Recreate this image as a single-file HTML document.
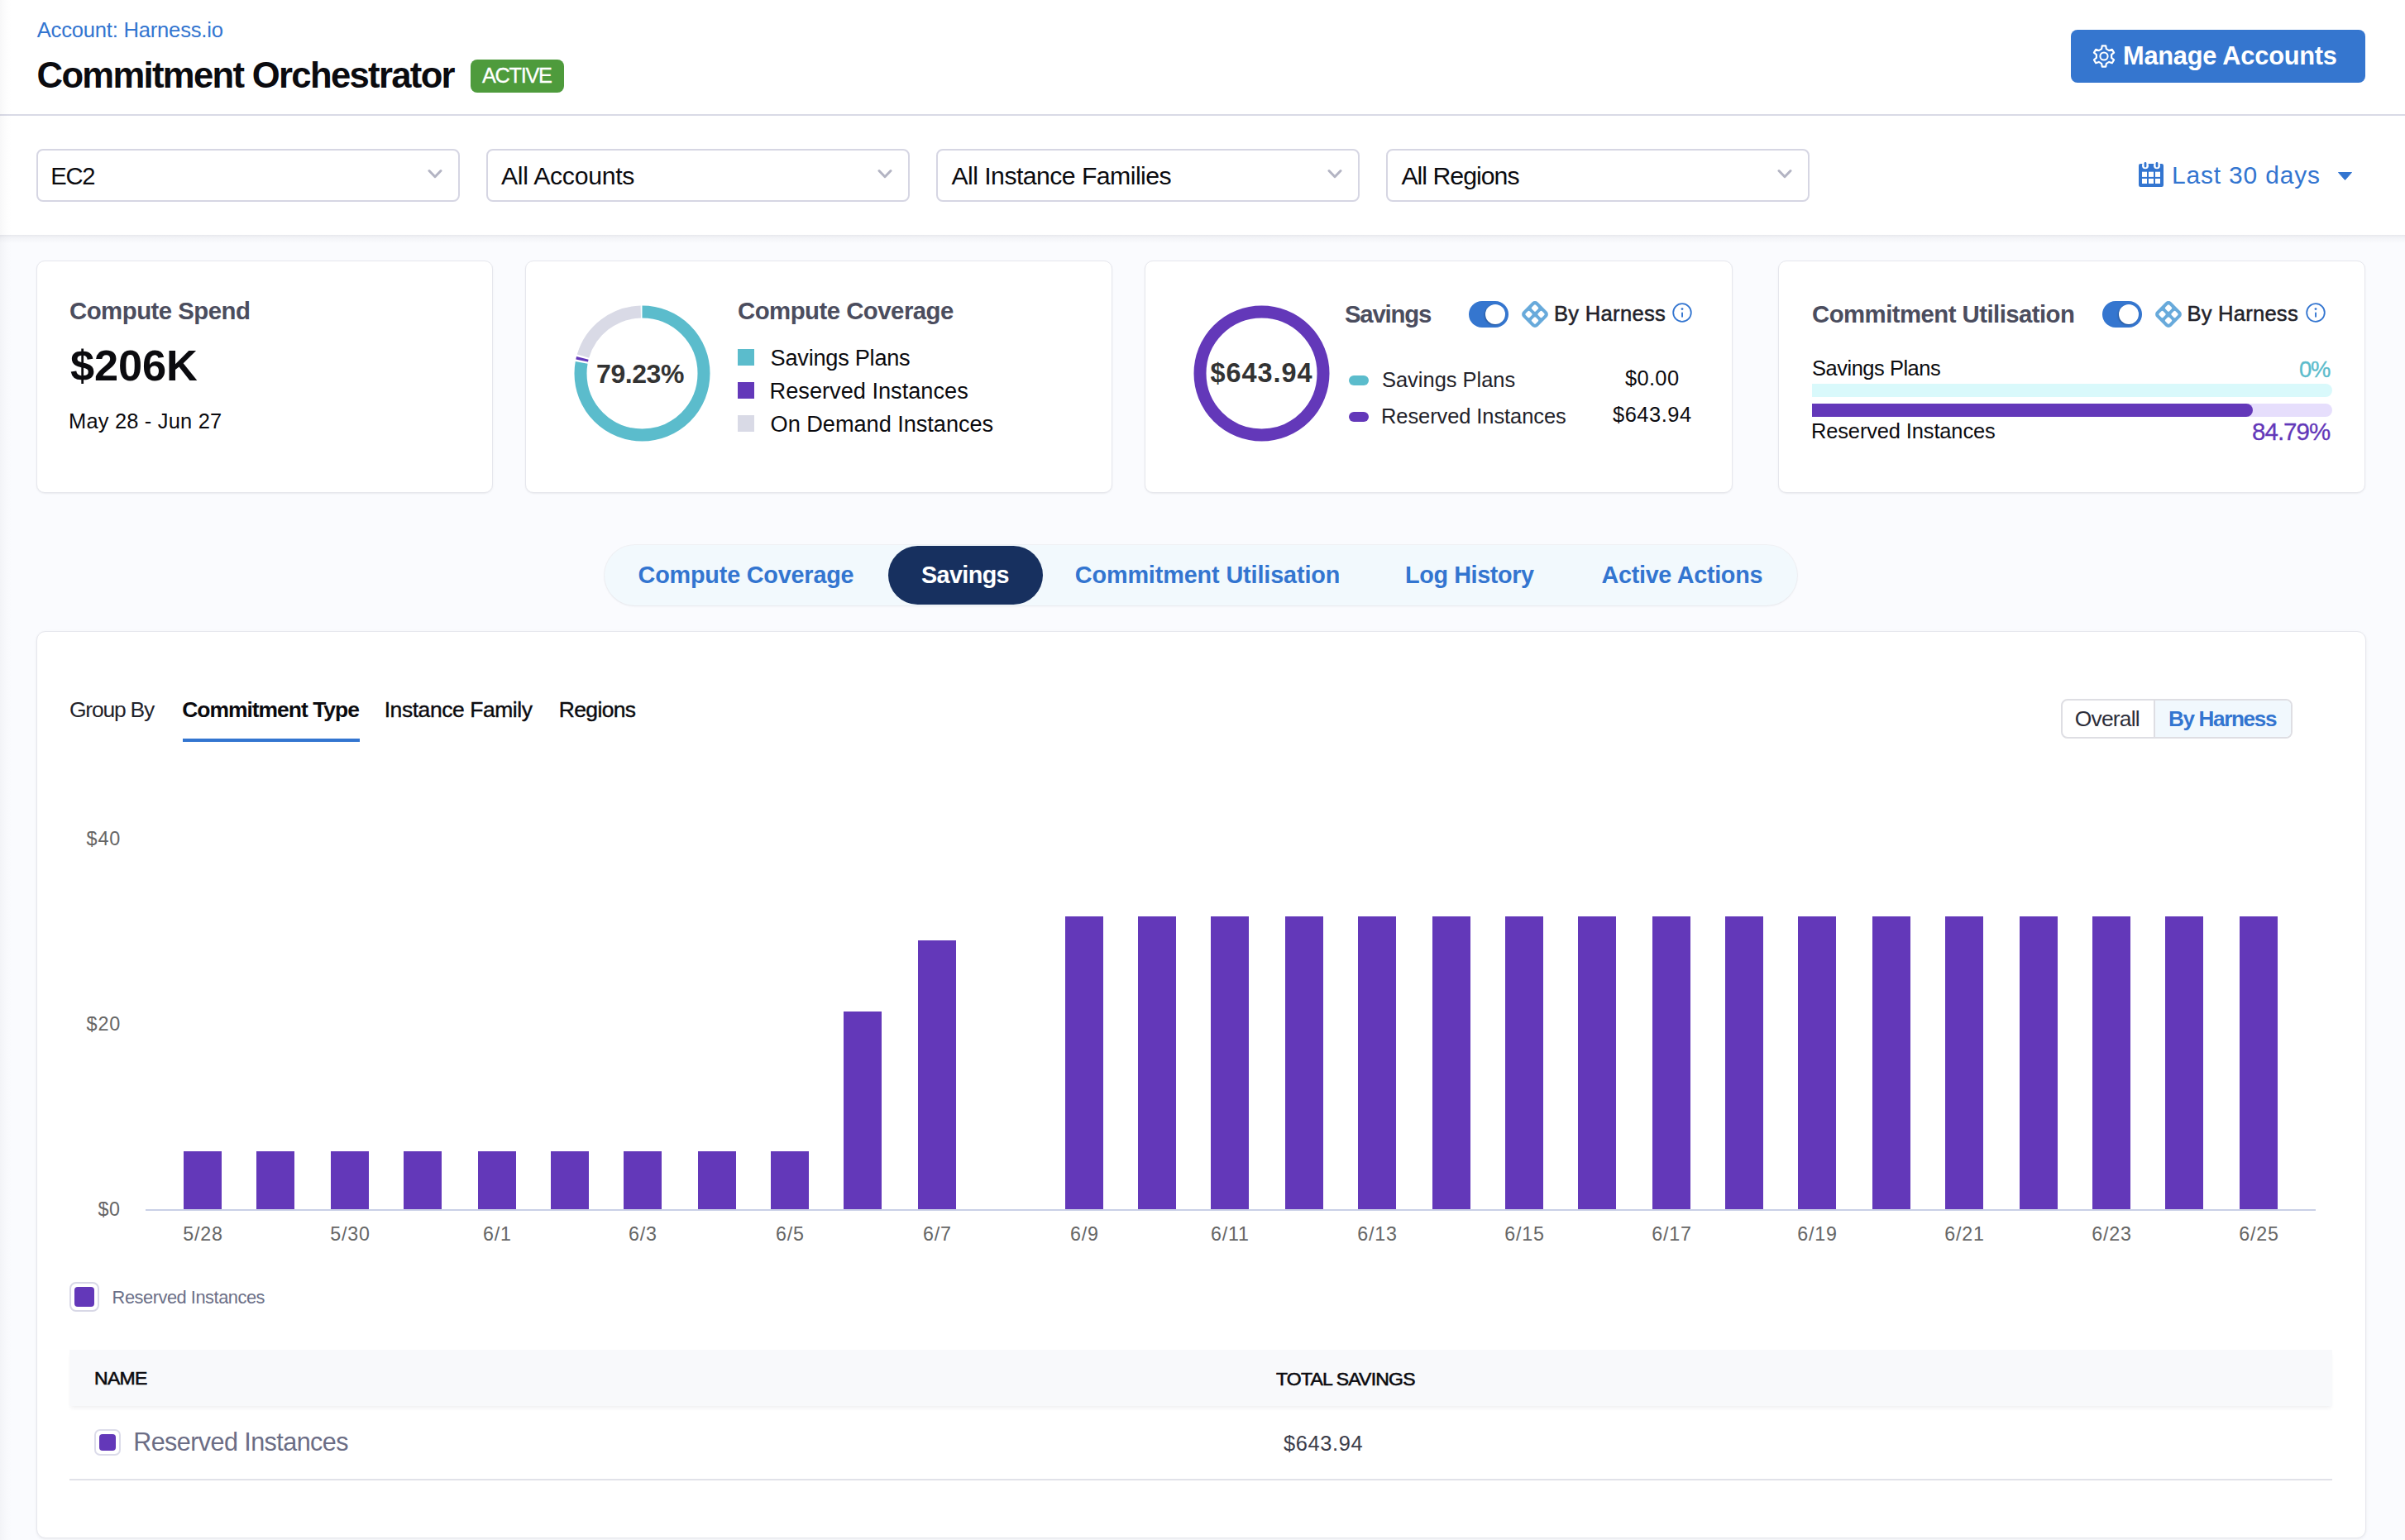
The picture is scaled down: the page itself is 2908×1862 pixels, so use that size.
<!DOCTYPE html>
<html><head><meta charset="utf-8"><title>Commitment Orchestrator</title>
<style>
html,body{margin:0;padding:0;}
body{width:2908px;height:1862px;overflow:hidden;position:relative;background:#fafbfe;font-family:"Liberation Sans",sans-serif;}
.tx{position:absolute;white-space:pre;line-height:1;}
</style></head><body>
<div style="position:absolute;left:0;top:0;width:2908px;height:138px;background:#fff"></div>
<div style="position:absolute;left:0;top:138px;width:2908px;height:2px;background:#d9dae6"></div>
<div style="position:absolute;left:0;top:140px;width:2908px;height:144px;background:#fff"></div>
<div style="position:absolute;left:0;top:284px;width:2908px;height:10px;background:linear-gradient(rgba(40,41,61,0.09),rgba(40,41,61,0.04) 30%,rgba(40,41,61,0))"></div>
<div style="position:absolute;left:0;top:0;width:14px;height:1862px;background:linear-gradient(to right,rgba(40,41,61,0.035),rgba(40,41,61,0.01) 50%,rgba(40,41,61,0))"></div>
<div style="position:absolute;left:569px;top:72px;width:113px;height:40px;border-radius:8px;background:#4e9b3c"></div>
<div style="position:absolute;left:2504px;top:36px;width:356px;height:64px;border-radius:8px;background:#3576cf"></div>
<svg style="position:absolute;left:2530.2px;top:53.8px" width="28" height="28" viewBox="0 0 28 28" fill="none" stroke="#fff" stroke-width="2.2" stroke-linejoin="round"><path d="M11.13 5.16 L11.78 1.39 L16.22 1.39 L16.87 5.16 L20.22 7.09 L23.81 5.77 L26.03 9.62 L23.10 12.07 L23.10 15.93 L26.03 18.38 L23.81 22.23 L20.22 20.91 L16.87 22.84 L16.22 26.61 L11.78 26.61 L11.13 22.84 L7.78 20.91 L4.19 22.23 L1.97 18.38 L4.90 15.93 L4.90 12.07 L1.97 9.62 L4.19 5.77 L7.78 7.09 Z"/><circle cx="14" cy="14" r="4.6" stroke-width="2"/></svg>
<div style="position:absolute;left:44px;top:180px;width:508px;height:60px;border:2px solid #d6d6e3;border-radius:8px;background:#fff"></div>
<svg style="position:absolute;left:517px;top:204px" width="20" height="12" viewBox="0 0 20 12"><polyline points="2,2.5 9,9.7 16,2.5" fill="none" stroke="#b3b4c3" stroke-width="3" stroke-linecap="round" stroke-linejoin="round"/></svg>
<div style="position:absolute;left:588px;top:180px;width:508px;height:60px;border:2px solid #d6d6e3;border-radius:8px;background:#fff"></div>
<svg style="position:absolute;left:1061px;top:204px" width="20" height="12" viewBox="0 0 20 12"><polyline points="2,2.5 9,9.7 16,2.5" fill="none" stroke="#b3b4c3" stroke-width="3" stroke-linecap="round" stroke-linejoin="round"/></svg>
<div style="position:absolute;left:1132px;top:180px;width:508px;height:60px;border:2px solid #d6d6e3;border-radius:8px;background:#fff"></div>
<svg style="position:absolute;left:1605px;top:204px" width="20" height="12" viewBox="0 0 20 12"><polyline points="2,2.5 9,9.7 16,2.5" fill="none" stroke="#b3b4c3" stroke-width="3" stroke-linecap="round" stroke-linejoin="round"/></svg>
<div style="position:absolute;left:1676px;top:180px;width:508px;height:60px;border:2px solid #d6d6e3;border-radius:8px;background:#fff"></div>
<svg style="position:absolute;left:2149px;top:204px" width="20" height="12" viewBox="0 0 20 12"><polyline points="2,2.5 9,9.7 16,2.5" fill="none" stroke="#b3b4c3" stroke-width="3" stroke-linecap="round" stroke-linejoin="round"/></svg>
<svg style="position:absolute;left:2586px;top:196px" width="30" height="30" viewBox="0 0 30 30"><rect x="0" y="2" width="30" height="28" rx="2.2" fill="#3375d0"/><g fill="#fff"><rect x="4" y="11.7" width="6" height="6.2"/><rect x="12" y="11.7" width="6" height="6.2"/><rect x="20" y="11.7" width="6" height="6.2"/><rect x="4" y="20" width="6" height="6"/><rect x="12" y="20" width="6" height="6"/><rect x="20" y="20" width="6" height="6"/><circle cx="8" cy="4.2" r="4"/><circle cx="22" cy="4.2" r="4"/></g><g fill="#3375d0"><rect x="6.6" y="0" width="2.8" height="6.4" rx="1.4"/><rect x="20.6" y="0" width="2.8" height="6.4" rx="1.4"/></g></svg>
<svg style="position:absolute;left:2827px;top:208px" width="17" height="10" viewBox="0 0 17 10"><path d="M0.5 0.5 H16.5 L8.5 9.5 Z" fill="#3375d0" stroke="#3375d0" stroke-linejoin="round"/></svg>
<div style="position:absolute;left:44px;top:315px;width:550px;height:279px;border:1px solid #e6e7ed;border-radius:10px;background:#fff;box-shadow:0 1px 2px rgba(96,97,112,0.10)"></div>
<div style="position:absolute;left:635px;top:315px;width:708px;height:279px;border:1px solid #e6e7ed;border-radius:10px;background:#fff;box-shadow:0 1px 2px rgba(96,97,112,0.10)"></div>
<div style="position:absolute;left:1384px;top:315px;width:709px;height:279px;border:1px solid #e6e7ed;border-radius:10px;background:#fff;box-shadow:0 1px 2px rgba(96,97,112,0.10)"></div>
<div style="position:absolute;left:2150px;top:315px;width:708px;height:279px;border:1px solid #e6e7ed;border-radius:10px;background:#fff;box-shadow:0 1px 2px rgba(96,97,112,0.10)"></div>
<svg style="position:absolute;left:686.5px;top:361.5px" width="179.0" height="179.0" viewBox="0 0 179.0 179.0"><circle cx="89.5" cy="89.5" r="74.5" fill="none" stroke="#5bbccc" stroke-width="15" stroke-dasharray="363.69 468.10" stroke-dashoffset="0.00" transform="rotate(-90 89.5 89.5)"/><circle cx="89.5" cy="89.5" r="74.5" fill="none" stroke="#6338b9" stroke-width="15" stroke-dasharray="3.12 468.10" stroke-dashoffset="-366.19" transform="rotate(-90 89.5 89.5)"/><circle cx="89.5" cy="89.5" r="74.5" fill="none" stroke="#d9dae6" stroke-width="15" stroke-dasharray="93.79 468.10" stroke-dashoffset="-371.81" transform="rotate(-90 89.5 89.5)"/></svg>
<svg style="position:absolute;left:1436.3px;top:361.5px" width="179.0" height="179.0" viewBox="0 0 179.0 179.0"><circle cx="89.5" cy="89.5" r="74.5" fill="none" stroke="#6338b9" stroke-width="15" stroke-dasharray="468.10 468.10" stroke-dashoffset="0.00" transform="rotate(-90 89.5 89.5)"/></svg>
<div style="position:absolute;left:892px;top:422px;width:20px;height:20px;background:#5bbccc"></div>
<div style="position:absolute;left:892px;top:462px;width:20px;height:20px;background:#6338b9"></div>
<div style="position:absolute;left:892px;top:502px;width:20px;height:20px;background:#d9dae6"></div>
<div style="position:absolute;left:1631px;top:454px;width:24px;height:12px;border-radius:6px;background:#5bbccc"></div>
<div style="position:absolute;left:1631px;top:498px;width:24px;height:12px;border-radius:6px;background:#6338b9"></div>
<div style="position:absolute;left:1776px;top:364px;width:48px;height:32px;border-radius:16px;background:#3576cf"></div><div style="position:absolute;left:1796px;top:368px;width:24px;height:24px;border-radius:12px;background:#fff;box-shadow:-1px 1px 2px rgba(0,0,0,0.25)"></div>
<svg style="position:absolute;left:1840px;top:364px" width="32" height="32" viewBox="0 0 32 32"><g transform="rotate(45 16 16)"><rect x="3.3" y="3.3" width="25.4" height="25.4" rx="5" fill="#68aadb"/><g fill="#fff"><rect x="7.3" y="7.3" width="6.8" height="6.8" rx="1.5"/><rect x="17.9" y="7.3" width="6.8" height="6.8" rx="1.5"/><rect x="7.3" y="17.9" width="6.8" height="6.8" rx="1.5"/><rect x="17.9" y="17.9" width="6.8" height="6.8" rx="1.5"/></g></g></svg>
<svg style="position:absolute;left:2022px;top:366px" width="24" height="24" viewBox="0 0 24 24"><circle cx="12" cy="12" r="10.8" fill="none" stroke="#3375d0" stroke-width="1.8"/><circle cx="12" cy="7.6" r="1.4" fill="#3375d0"/><rect x="11.1" y="11.5" width="1.9" height="6.2" rx="0.9" fill="#3375d0"/></svg>
<div style="position:absolute;left:2542px;top:364px;width:48px;height:32px;border-radius:16px;background:#3576cf"></div><div style="position:absolute;left:2562px;top:368px;width:24px;height:24px;border-radius:12px;background:#fff;box-shadow:-1px 1px 2px rgba(0,0,0,0.25)"></div>
<svg style="position:absolute;left:2606px;top:364px" width="32" height="32" viewBox="0 0 32 32"><g transform="rotate(45 16 16)"><rect x="3.3" y="3.3" width="25.4" height="25.4" rx="5" fill="#68aadb"/><g fill="#fff"><rect x="7.3" y="7.3" width="6.8" height="6.8" rx="1.5"/><rect x="17.9" y="7.3" width="6.8" height="6.8" rx="1.5"/><rect x="7.3" y="17.9" width="6.8" height="6.8" rx="1.5"/><rect x="17.9" y="17.9" width="6.8" height="6.8" rx="1.5"/></g></g></svg>
<svg style="position:absolute;left:2788px;top:366px" width="24" height="24" viewBox="0 0 24 24"><circle cx="12" cy="12" r="10.8" fill="none" stroke="#3375d0" stroke-width="1.8"/><circle cx="12" cy="7.6" r="1.4" fill="#3375d0"/><rect x="11.1" y="11.5" width="1.9" height="6.2" rx="0.9" fill="#3375d0"/></svg>
<div style="position:absolute;left:2191px;top:464px;width:629px;height:16px;border-radius:0 8px 8px 0;background:#d9f9fb"></div>
<div style="position:absolute;left:2191px;top:488px;width:629px;height:16px;border-radius:0 8px 8px 0;background:#e6defc"></div>
<div style="position:absolute;left:2191px;top:488px;width:533px;height:16px;border-radius:0 8px 8px 0;background:#6338b9"></div>
<div style="position:absolute;left:731px;top:659px;width:1442px;height:73px;border-radius:37px;background:#f2f9fd;box-shadow:0 0 0 1px rgba(40,41,61,0.04),0 1px 3px rgba(40,41,61,0.06)"></div>
<div style="position:absolute;left:1074px;top:660px;width:187px;height:71px;border-radius:36px;background:#17305f"></div>
<div style="position:absolute;left:44px;top:763px;width:2815px;height:1095px;border:1px solid #e6e7ed;border-radius:11px;background:#fff;box-shadow:0 1px 3px rgba(96,97,112,0.10)"></div>
<div style="position:absolute;left:221px;top:893px;width:214px;height:4px;background:#3375d0"></div>
<div style="position:absolute;left:2492px;top:845px;width:276px;height:44px;border:2px solid #dedee3;border-radius:8px;background:#fff;overflow:hidden"><div style="position:absolute;left:110px;top:0;width:2px;height:44px;background:#dedee3"></div><div style="position:absolute;left:112px;top:0;width:164px;height:44px;background:#f1f8fd"></div></div>
<div style="position:absolute;left:176px;top:1462px;width:2624px;height:2px;background:#c9d0e6"></div>
<div style="position:absolute;left:222px;top:1392px;width:46px;height:70px;background:#6338b9"></div>
<div style="position:absolute;left:310px;top:1392px;width:46px;height:70px;background:#6338b9"></div>
<div style="position:absolute;left:400px;top:1392px;width:46px;height:70px;background:#6338b9"></div>
<div style="position:absolute;left:488px;top:1392px;width:46px;height:70px;background:#6338b9"></div>
<div style="position:absolute;left:578px;top:1392px;width:46px;height:70px;background:#6338b9"></div>
<div style="position:absolute;left:666px;top:1392px;width:46px;height:70px;background:#6338b9"></div>
<div style="position:absolute;left:754px;top:1392px;width:46px;height:70px;background:#6338b9"></div>
<div style="position:absolute;left:844px;top:1392px;width:46px;height:70px;background:#6338b9"></div>
<div style="position:absolute;left:932px;top:1392px;width:46px;height:70px;background:#6338b9"></div>
<div style="position:absolute;left:1020px;top:1223px;width:46px;height:239px;background:#6338b9"></div>
<div style="position:absolute;left:1110px;top:1137px;width:46px;height:325px;background:#6338b9"></div>
<div style="position:absolute;left:1288px;top:1108px;width:46px;height:354px;background:#6338b9"></div>
<div style="position:absolute;left:1376px;top:1108px;width:46px;height:354px;background:#6338b9"></div>
<div style="position:absolute;left:1464px;top:1108px;width:46px;height:354px;background:#6338b9"></div>
<div style="position:absolute;left:1554px;top:1108px;width:46px;height:354px;background:#6338b9"></div>
<div style="position:absolute;left:1642px;top:1108px;width:46px;height:354px;background:#6338b9"></div>
<div style="position:absolute;left:1732px;top:1108px;width:46px;height:354px;background:#6338b9"></div>
<div style="position:absolute;left:1820px;top:1108px;width:46px;height:354px;background:#6338b9"></div>
<div style="position:absolute;left:1908px;top:1108px;width:46px;height:354px;background:#6338b9"></div>
<div style="position:absolute;left:1998px;top:1108px;width:46px;height:354px;background:#6338b9"></div>
<div style="position:absolute;left:2086px;top:1108px;width:46px;height:354px;background:#6338b9"></div>
<div style="position:absolute;left:2174px;top:1108px;width:46px;height:354px;background:#6338b9"></div>
<div style="position:absolute;left:2264px;top:1108px;width:46px;height:354px;background:#6338b9"></div>
<div style="position:absolute;left:2352px;top:1108px;width:46px;height:354px;background:#6338b9"></div>
<div style="position:absolute;left:2442px;top:1108px;width:46px;height:354px;background:#6338b9"></div>
<div style="position:absolute;left:2530px;top:1108px;width:46px;height:354px;background:#6338b9"></div>
<div style="position:absolute;left:2618px;top:1108px;width:46px;height:354px;background:#6338b9"></div>
<div style="position:absolute;left:2708px;top:1108px;width:46px;height:354px;background:#6338b9"></div>
<div style="position:absolute;left:84px;top:1550px;width:32px;height:32px;border:2px solid #d8d8e6;border-radius:8px;background:#fff"></div>
<div style="position:absolute;left:90px;top:1556px;width:24px;height:24px;border-radius:4px;background:#6338b9"></div>
<div style="position:absolute;left:84px;top:1632px;width:2736px;height:68px;background:#f8f9fb;box-shadow:0 4px 5px -2px rgba(40,41,61,0.08)"></div>
<div style="position:absolute;left:114px;top:1728px;width:28px;height:28px;border:2px solid #dcdcea;border-radius:7px;background:#fff"></div>
<div style="position:absolute;left:120px;top:1734px;width:20px;height:20px;border-radius:4px;background:#6338b9"></div>
<div style="position:absolute;left:84px;top:1788px;width:2736px;height:2px;background:#e1e2e9"></div>
<div class="tx" id="acct" style="left:44.70px;top:24.00px;font-size:25.58px;font-weight:400;color:#3375d0;letter-spacing:-0.204px">Account: Harness.io</div>
<div class="tx" id="title" style="left:44.60px;top:70.00px;font-size:43.6px;font-weight:700;color:#0b0b0f;letter-spacing:-1.665px">Commitment Orchestrator</div>
<div class="tx" id="active" style="left:583.00px;top:79.00px;font-size:25.29px;font-weight:400;color:#ffffff;letter-spacing:-1.290px;-webkit-text-stroke:0.3px #ffffff">ACTIVE</div>
<div class="tx" id="manage" style="left:2567.00px;top:53.00px;font-size:30.81px;font-weight:700;color:#ffffff;letter-spacing:-0.243px">Manage Accounts</div>
<div class="tx" id="dd1" style="left:61.20px;top:199.00px;font-size:29.17px;font-weight:400;color:#0b0b0f;letter-spacing:-1.251px">EC2</div>
<div class="tx" id="dd2" style="left:606.00px;top:198.00px;font-size:30.23px;font-weight:400;color:#0b0b0f;letter-spacing:-0.288px">All Accounts</div>
<div class="tx" id="dd3" style="left:1150.50px;top:198.00px;font-size:30.23px;font-weight:400;color:#0b0b0f;letter-spacing:-0.550px">All Instance Families</div>
<div class="tx" id="dd4" style="left:1694.40px;top:198.00px;font-size:30.23px;font-weight:400;color:#0b0b0f;letter-spacing:-0.974px">All Regions</div>
<div class="tx" id="last30" style="left:2626.00px;top:197.00px;font-size:29.94px;font-weight:400;color:#3375d0;letter-spacing:0.837px">Last 30 days</div>
<div class="tx" id="cs_t" style="left:84.00px;top:361.00px;font-size:29.36px;font-weight:700;color:#4b4d5e;letter-spacing:-0.512px">Compute Spend</div>
<div class="tx" id="cs_v" style="left:85.00px;top:416.00px;font-size:52.33px;font-weight:700;color:#0b0b0f;letter-spacing:-0.102px">$206K</div>
<div class="tx" id="cs_d" style="left:83.00px;top:497.00px;font-size:25.44px;font-weight:400;color:#0b0b0f;letter-spacing:0.196px">May 28 - Jun 27</div>
<div class="tx" id="cc_t" style="left:892.00px;top:361.00px;font-size:29.36px;font-weight:700;color:#4b4d5e;letter-spacing:-0.523px">Compute Coverage</div>
<div class="tx" id="cc_pct" style="left:721.00px;top:436.00px;font-size:31.98px;font-weight:700;color:#333333;letter-spacing:-0.400px">79.23%</div>
<div class="tx" id="cc_l1" style="left:931.60px;top:419.00px;font-size:27.18px;font-weight:400;color:#0b0b0f;letter-spacing:-0.258px">Savings Plans</div>
<div class="tx" id="cc_l2" style="left:930.60px;top:459.00px;font-size:27.18px;font-weight:400;color:#0b0b0f;letter-spacing:0.000px">Reserved Instances</div>
<div class="tx" id="cc_l3" style="left:931.60px;top:499.00px;font-size:27.18px;font-weight:400;color:#0b0b0f;letter-spacing:-0.043px">On Demand Instances</div>
<div class="tx" id="sv_v" style="left:1463.50px;top:435.00px;font-size:32.41px;font-weight:700;color:#333333;letter-spacing:0.980px">$643.94</div>
<div class="tx" id="sv_t" style="left:1626.00px;top:365.00px;font-size:29.36px;font-weight:700;color:#4b4d5e;letter-spacing:-1.211px">Savings</div>
<div class="tx" id="sv_bh" style="left:1879.00px;top:367.00px;font-size:25.58px;font-weight:400;color:#22222a;letter-spacing:0.288px;-webkit-text-stroke:0.5px #22222a">By Harness</div>
<div class="tx" id="sv_l1" style="left:1671.00px;top:447.00px;font-size:25.44px;font-weight:400;color:#22222a;letter-spacing:0.000px">Savings Plans</div>
<div class="tx" id="sv_l2" style="left:1670.00px;top:491.00px;font-size:25.44px;font-weight:400;color:#22222a;letter-spacing:-0.064px">Reserved Instances</div>
<div class="tx" id="sv_a1" style="left:1964.90px;top:445.00px;font-size:25.44px;font-weight:400;color:#0b0b0f;letter-spacing:0.373px">$0.00</div>
<div class="tx" id="sv_a2" style="left:1950.00px;top:489.00px;font-size:25.44px;font-weight:400;color:#0b0b0f;letter-spacing:0.533px">$643.94</div>
<div class="tx" id="cu_t" style="left:2191.00px;top:365.00px;font-size:29.36px;font-weight:700;color:#4b4d5e;letter-spacing:-0.550px">Commitment Utilisation</div>
<div class="tx" id="cu_bh" style="left:2644.40px;top:367.00px;font-size:25.58px;font-weight:400;color:#22222a;letter-spacing:0.232px;-webkit-text-stroke:0.5px #22222a">By Harness</div>
<div class="tx" id="cu_l1" style="left:2191.00px;top:433.00px;font-size:25.44px;font-weight:400;color:#0b0b0f;letter-spacing:-0.456px">Savings Plans</div>
<div class="tx" id="cu_p1" style="left:2780.00px;top:433.00px;font-size:27.42px;font-weight:400;color:#5bbccc;letter-spacing:-1.242px;-webkit-text-stroke:0.3px #5bbccc">0%</div>
<div class="tx" id="cu_l2" style="left:2190.00px;top:509.00px;font-size:25.44px;font-weight:400;color:#0b0b0f;letter-spacing:-0.123px">Reserved Instances</div>
<div class="tx" id="cu_p2" style="left:2723.00px;top:507.00px;font-size:29.51px;font-weight:400;color:#6338b9;letter-spacing:-0.964px;-webkit-text-stroke:0.3px #6338b9">84.79%</div>
<div class="tx" id="tab1" style="left:771.60px;top:681.00px;font-size:28.78px;font-weight:700;color:#3375d0;letter-spacing:-0.183px">Compute Coverage</div>
<div class="tx" id="tab2" style="left:1114.00px;top:681.00px;font-size:28.78px;font-weight:700;color:#ffffff;letter-spacing:-0.620px">Savings</div>
<div class="tx" id="tab3" style="left:1299.80px;top:681.00px;font-size:28.78px;font-weight:700;color:#3375d0;letter-spacing:-0.107px">Commitment Utilisation</div>
<div class="tx" id="tab4" style="left:1699.00px;top:681.00px;font-size:28.78px;font-weight:700;color:#3375d0;letter-spacing:-0.381px">Log History</div>
<div class="tx" id="tab5" style="left:1936.50px;top:681.00px;font-size:28.78px;font-weight:700;color:#3375d0;letter-spacing:-0.294px">Active Actions</div>
<div class="tx" id="gb0" style="left:84.00px;top:845.00px;font-size:26.45px;font-weight:400;color:#22222a;letter-spacing:-1.208px">Group By</div>
<div class="tx" id="gb1" style="left:220.20px;top:845.00px;font-size:26.45px;font-weight:700;color:#0b0b0f;letter-spacing:-0.997px">Commitment Type</div>
<div class="tx" id="gb2" style="left:464.70px;top:845.00px;font-size:26.45px;font-weight:400;color:#0b0b0f;letter-spacing:-0.422px;-webkit-text-stroke:0.4px #0b0b0f">Instance Family</div>
<div class="tx" id="gb3" style="left:675.80px;top:845.00px;font-size:26.45px;font-weight:400;color:#0b0b0f;letter-spacing:-0.630px;-webkit-text-stroke:0.4px #0b0b0f">Regions</div>
<div class="tx" id="ov1" style="left:2508.80px;top:856.00px;font-size:26.45px;font-weight:400;color:#2d2e3a;letter-spacing:-0.811px">Overall</div>
<div class="tx" id="ov2" style="left:2621.90px;top:856.00px;font-size:26.1px;font-weight:700;color:#3375d0;letter-spacing:-1.342px">By Harness</div>
<div class="tx" id="y40" style="left:104.60px;top:1003.00px;font-size:23.43px;font-weight:400;color:#666666;letter-spacing:0.774px">$40</div>
<div class="tx" id="y20" style="left:104.60px;top:1227.00px;font-size:23.43px;font-weight:400;color:#666666;letter-spacing:0.774px">$20</div>
<div class="tx" id="y0" style="left:118.60px;top:1451.00px;font-size:23.32px;font-weight:400;color:#666666;letter-spacing:0.335px">$0</div>
<div class="tx" id="leg" style="left:135.60px;top:1558.00px;font-size:21.8px;font-weight:400;color:#6b6f87;letter-spacing:-0.455px">Reserved Instances</div>
<div class="tx" id="th1" style="left:114.00px;top:1655.00px;font-size:22.97px;font-weight:400;color:#0b0b0f;letter-spacing:-0.680px;-webkit-text-stroke:0.6px #0b0b0f">NAME</div>
<div class="tx" id="th2" style="left:1543.00px;top:1656.00px;font-size:22.97px;font-weight:400;color:#0b0b0f;letter-spacing:-0.781px;-webkit-text-stroke:0.6px #0b0b0f">TOTAL SAVINGS</div>
<div class="tx" id="td1" style="left:161.20px;top:1728.00px;font-size:30.52px;font-weight:400;color:#6b6d85;letter-spacing:-0.555px">Reserved Instances</div>
<div class="tx" id="td2" style="left:1552.00px;top:1733.00px;font-size:25.44px;font-weight:400;color:#3c3d4a;letter-spacing:0.633px">$643.94</div>
<div class="tx" id="dt0" style="left:-54.60px;width:600px;text-align:center;top:1481.00px;font-size:23.26px;font-weight:400;color:#666666;letter-spacing:0.800px">5/28</div>
<div class="tx" id="dt1" style="left:123.40px;width:600px;text-align:center;top:1481.00px;font-size:23.26px;font-weight:400;color:#666666;letter-spacing:0.800px">5/30</div>
<div class="tx" id="dt2" style="left:301.40px;width:600px;text-align:center;top:1481.00px;font-size:23.26px;font-weight:400;color:#666666;letter-spacing:0.800px">6/1</div>
<div class="tx" id="dt3" style="left:477.40px;width:600px;text-align:center;top:1481.00px;font-size:23.26px;font-weight:400;color:#666666;letter-spacing:0.800px">6/3</div>
<div class="tx" id="dt4" style="left:655.40px;width:600px;text-align:center;top:1481.00px;font-size:23.26px;font-weight:400;color:#666666;letter-spacing:0.800px">6/5</div>
<div class="tx" id="dt5" style="left:833.40px;width:600px;text-align:center;top:1481.00px;font-size:23.26px;font-weight:400;color:#666666;letter-spacing:0.800px">6/7</div>
<div class="tx" id="dt6" style="left:1011.40px;width:600px;text-align:center;top:1481.00px;font-size:23.26px;font-weight:400;color:#666666;letter-spacing:0.800px">6/9</div>
<div class="tx" id="dt7" style="left:1187.40px;width:600px;text-align:center;top:1481.00px;font-size:23.26px;font-weight:400;color:#666666;letter-spacing:0.800px">6/11</div>
<div class="tx" id="dt8" style="left:1365.40px;width:600px;text-align:center;top:1481.00px;font-size:23.26px;font-weight:400;color:#666666;letter-spacing:0.800px">6/13</div>
<div class="tx" id="dt9" style="left:1543.40px;width:600px;text-align:center;top:1481.00px;font-size:23.26px;font-weight:400;color:#666666;letter-spacing:0.800px">6/15</div>
<div class="tx" id="dt10" style="left:1721.40px;width:600px;text-align:center;top:1481.00px;font-size:23.26px;font-weight:400;color:#666666;letter-spacing:0.800px">6/17</div>
<div class="tx" id="dt11" style="left:1897.40px;width:600px;text-align:center;top:1481.00px;font-size:23.26px;font-weight:400;color:#666666;letter-spacing:0.800px">6/19</div>
<div class="tx" id="dt12" style="left:2075.40px;width:600px;text-align:center;top:1481.00px;font-size:23.26px;font-weight:400;color:#666666;letter-spacing:0.800px">6/21</div>
<div class="tx" id="dt13" style="left:2253.40px;width:600px;text-align:center;top:1481.00px;font-size:23.26px;font-weight:400;color:#666666;letter-spacing:0.800px">6/23</div>
<div class="tx" id="dt14" style="left:2431.40px;width:600px;text-align:center;top:1481.00px;font-size:23.26px;font-weight:400;color:#666666;letter-spacing:0.800px">6/25</div>
</body></html>
